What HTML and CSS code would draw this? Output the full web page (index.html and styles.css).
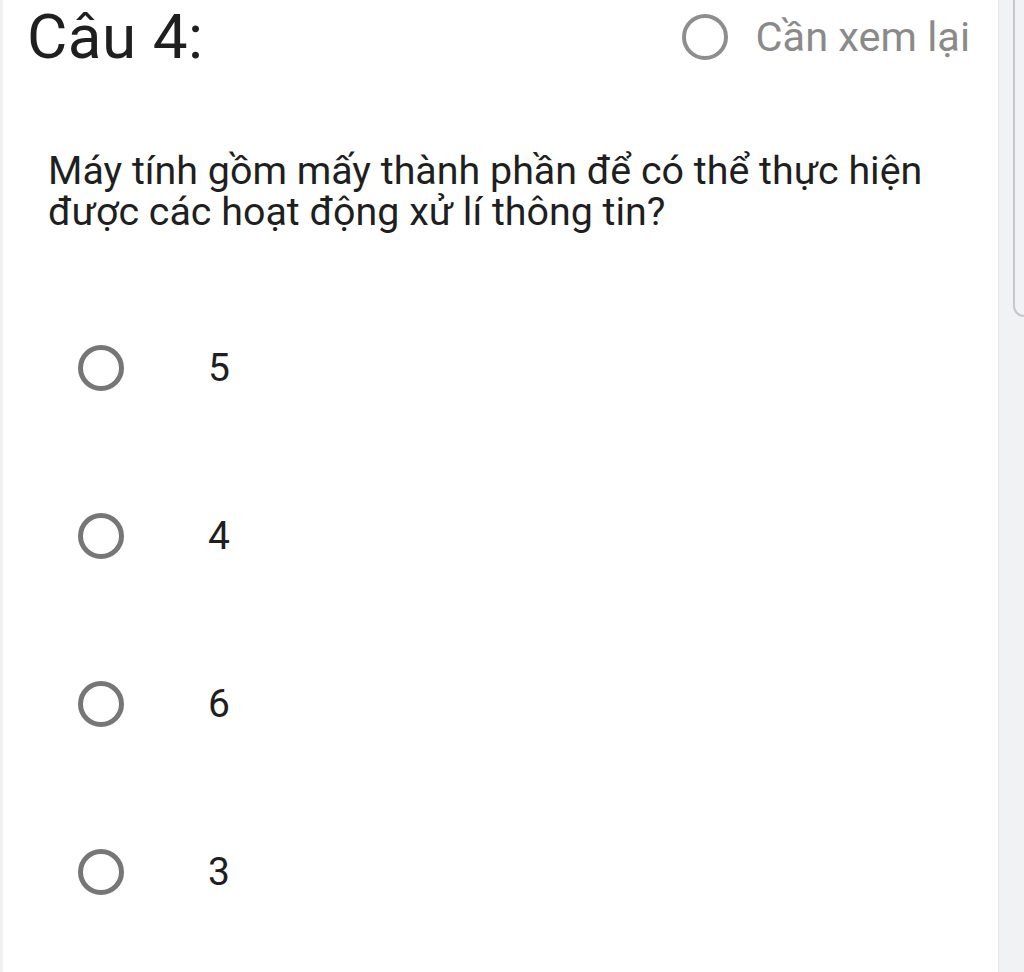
FILE: index.html
```html
<!DOCTYPE html>
<html lang="vi">
<head>
<meta charset="utf-8">
<title>Câu 4</title>
<link rel="stylesheet" href="styles.css">
</head>
<body>
<div class="page">
  <main class="main">
    <header class="header">
      <h1 class="title">Câu 4:</h1>
      <label class="review">
        <span class="radio radio-light"></span>
        <span class="review-text">Cần xem lại</span>
      </label>
    </header>
    <p class="question">Máy tính gồm mấy thành phần để có thể thực hiện<br>được các hoạt động xử lí thông tin?</p>
    <ul class="options">
      <li class="option"><span class="radio"></span><span class="option-text">5</span></li>
      <li class="option"><span class="radio"></span><span class="option-text">4</span></li>
      <li class="option"><span class="radio"></span><span class="option-text">6</span></li>
      <li class="option"><span class="radio"></span><span class="option-text">3</span></li>
    </ul>
  </main>
  <aside class="side">
    <div class="side-tab"></div>
  </aside>
</div>
</body>
</html>
```
FILE: styles.css
```css
html, body {
  margin: 0;
  padding: 0;
  background: #ffffff;
}
body {
  font-family: Roboto, "Noto Sans", "Liberation Sans", sans-serif;
  color: #1f1f1f;
}
.page {
  display: flex;
  height: 972px;
  overflow: hidden;
}
.main {
  flex: 1;
  border-left: 3px solid #f0f0f0;
  padding: 0 28px 0 24px;
}
.header {
  display: flex;
  justify-content: space-between;
  align-items: center;
  padding-top: 6px;
}
.title {
  margin: 0;
  font-size: 62px;
  line-height: 1;
  font-weight: 400;
  letter-spacing: 0.5px;
  color: #1f1f1f;
}
.review {
  display: flex;
  align-items: center;
  gap: 28px;
}
.review-text {
  font-size: 41.5px;
  line-height: 1;
  color: #8a8a8a;
}
.radio {
  box-sizing: border-box;
  width: 46px;
  height: 46px;
  border-radius: 50%;
  border: 5px solid #767676;
  flex: none;
}
.radio-light {
  border: 4px solid #8e8e8e;
}
.question {
  margin: 82px 0 0 21px;
  font-size: 39.4px;
  line-height: 41px;
  color: #1f1f1f;
}
.options {
  list-style: none;
  margin: 52px 0 0 51px;
  padding: 0;
}
.option {
  display: flex;
  align-items: center;
  height: 168px;
  gap: 84px;
}
.option-text {
  font-size: 39px;
  line-height: 1;
  color: #1f1f1f;
}
.side {
  width: 25px;
  flex: none;
  background: #f1f2f4;
  border-left: 1px solid #e6e7e9;
}
.side-tab {
  margin-left: 14px;
  height: 317px;
  border-left: 2px solid #c6c7ca;
  border-bottom: 2px solid #c6c7ca;
  border-bottom-left-radius: 12px;
  box-sizing: border-box;
}
```
